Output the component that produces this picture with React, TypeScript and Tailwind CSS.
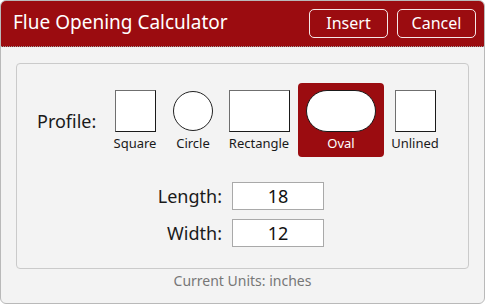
import React from "react";

const font = { fontFamily: '"Noto Sans", "Open Sans", sans-serif' };

type Shape = "square" | "circle" | "rectangle" | "oval" | "unlined";

const SHAPES: { id: Shape; label: string; col: string }[] = [
  { id: "square", label: "Square", col: "w-[46px] ml-0" },
  { id: "circle", label: "Circle", col: "w-[46px] ml-[12px]" },
  { id: "rectangle", label: "Rectangle", col: "w-[66px] ml-[10px]" },
  { id: "oval", label: "Oval", col: "w-[86px] ml-[6px]" },
  { id: "unlined", label: "Unlined", col: "w-[50px] ml-[6px]" },
];

function ShapeBox({ id }: { id: Shape }) {
  if (id === "circle")
    return <div className="w-[40px] h-[42px] flex items-center justify-center"><div className="w-[40px] h-[40px] rounded-full bg-white border border-[#222]" /></div>;
  if (id === "oval")
    return <div className="w-[70px] h-[42px] rounded-full bg-white border-[1.5px] border-[#1a1a1a]" />;
  const w = id === "rectangle" ? "w-[61px]" : "w-[41px]";
  return (
    <div className={`${w} h-[42px] bg-white border-[1.5px] border-t-[#6f6f6f] border-l-[#6f6f6f] border-r-[#1a1a1a] border-b-[#1a1a1a]`} />
  );
}

export default function App() {
  const selected: Shape = "oval";

  return (
    <div style={font} className="w-[485px] h-[304px] bg-[#f3f3f3] rounded-[6px] border border-[#b9b9b9] overflow-hidden flex flex-col">
      {/* header */}
      <div className="h-[46px] shrink-0 bg-[#9b0c10] border-b border-dotted border-[#9a9a9a] flex items-center pl-[12px] pr-[8px]">
        <h1 className="text-white text-[19px] leading-none flex-1 -mt-[2px]">Flue Opening Calculator</h1>
        <button className="w-[79px] h-[29px] rounded-[5px] border-[1.5px] border-white/90 text-white text-[16px] leading-none -mt-[1px]">Insert</button>
        <button className="w-[79px] h-[29px] rounded-[5px] border-[1.5px] border-white/90 text-white text-[16px] leading-none ml-[9px] -mt-[1px]">Cancel</button>
      </div>

      {/* body */}
      <div className="flex-1 px-[15px] pt-[16px]">
        <div className="h-[206px] rounded-[4px] border border-[#cacaca] pl-[20px] pt-[19px]">
          <div className="flex items-start">
            <div className="w-[75px] pt-[29px] text-[18px] leading-none text-[#1a1a1a]">Profile:</div>
            {SHAPES.map((s) => {
              const on = s.id === selected;
              return (
                <div
                  key={s.id}
                  className={`${s.col} h-[74px] pt-[7px] flex flex-col items-center rounded-[4px] ${on ? "bg-[#9b0c10]" : ""}`}
                >
                  <ShapeBox id={s.id} />
                  <span className={`mt-[3px] text-[13px] leading-[16px] ${on ? "text-white" : "text-[#1a1a1a]"}`}>{s.label}</span>
                </div>
              );
            })}
          </div>

          <div className="grid grid-cols-[185px_92px] gap-x-[10px] gap-y-[9px] mt-[25px] items-center">
            <label className="text-right text-[18px] leading-none text-[#1a1a1a]">Length:</label>
            <div className="h-[28px] bg-white border border-[#a9a9a9] flex items-center justify-center text-[18px] text-[#111]">18</div>
            <label className="text-right text-[18px] leading-none text-[#1a1a1a]">Width:</label>
            <div className="h-[28px] bg-white border border-[#a9a9a9] flex items-center justify-center text-[18px] text-[#111]">12</div>
          </div>
        </div>
        <p className="text-center text-[14px] text-[#777] mt-[1px]">Current Units: inches</p>
      </div>
    </div>
  );
}
